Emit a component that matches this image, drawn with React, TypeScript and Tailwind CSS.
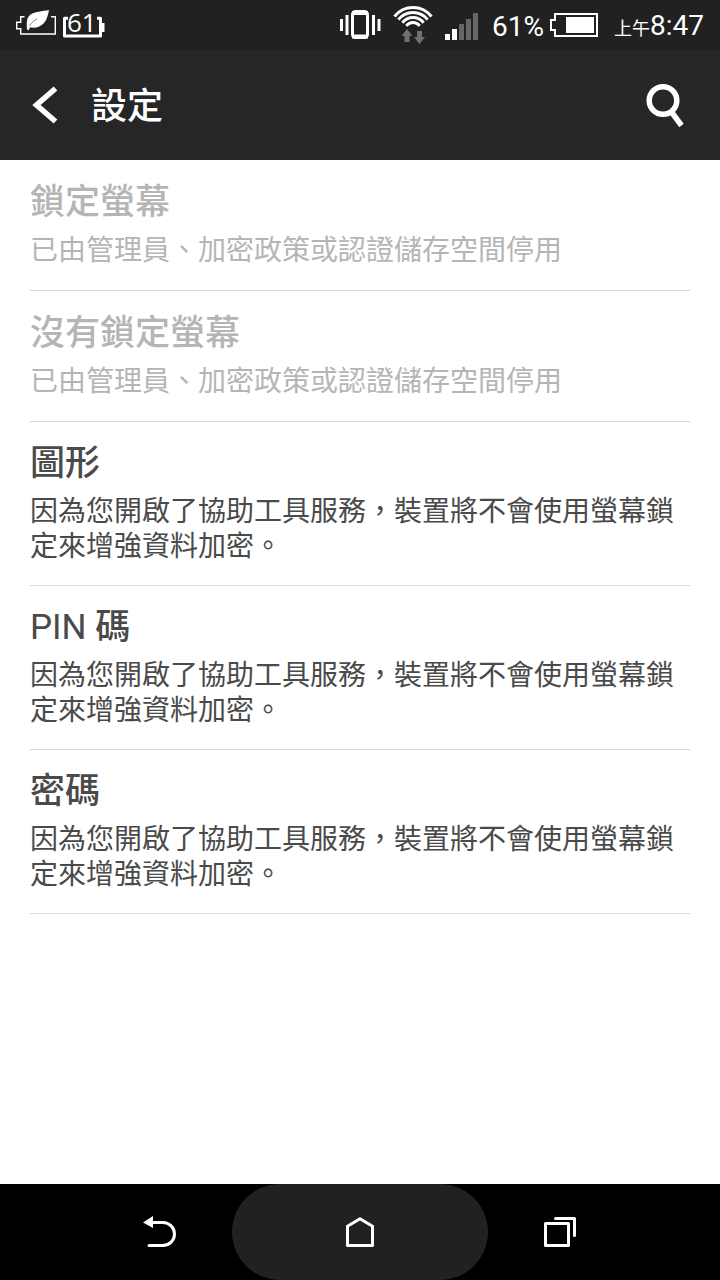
import type { ReactNode } from 'react';

interface LockOption {
  id: string;
  title: ReactNode;
  description: string;
  disabled?: boolean;
}

const DISABLED_TEXT = '已由管理員、加密政策或認證儲存空間停用';
const ACCESSIBILITY_TEXT = '因為您開啟了協助工具服務，裝置將不會使用螢幕鎖定來增強資料加密。';

const options: LockOption[] = [
  { id: 'lock', title: '鎖定螢幕', description: DISABLED_TEXT, disabled: true },
  { id: 'none', title: '沒有鎖定螢幕', description: DISABLED_TEXT, disabled: true },
  { id: 'pattern', title: '圖形', description: ACCESSIBILITY_TEXT },
  { id: 'pin', title: <><span className="font-normal">PIN</span> 碼</>, description: ACCESSIBILITY_TEXT },
  { id: 'password', title: '密碼', description: ACCESSIBILITY_TEXT },
];

function StatusBar() {
  return (
    <div className="flex h-[50px] items-center justify-between bg-[#212121] px-4 text-white">
      <div className="flex items-center gap-1.5">
        {/* Power saver */}
        <svg width="41" height="50" viewBox="0 0 41 50" fill="none">
          <path d="M8.500 16.7H4.700v5.600H.7v6.400h4v5.300H39.300V16.700H35" stroke="#fff" strokeWidth="1.400" />
          <path d="M33 10C27 11.500 18 11 13.500 15.500 10.500 18.500 10.500 23 11 29.500l1.700.8 1.300-3C19 28.500 24.500 27 28 23c3-3.500 4-8 5-13Z" fill="#fff" />
          <path d="M13.500 26c2-3.500 4.500-5.500 7.500-7" stroke="#666" strokeWidth=".8" />
        </svg>
        <div className="relative flex h-[50px] w-[42px] items-center">
          <svg className="absolute inset-0" width="42" height="50" viewBox="0 0 42 50" fill="none">
            <path d="M5 18.200H1.500V36H37.500V18.200H34" stroke="#fff" strokeWidth="3" strokeLinejoin="round" />
            <path d="M37 23h4.500v9H37z" fill="#fff" />
          </svg>
          <span className="relative pb-1.5 pl-1 font-['Open_Sans',sans-serif] text-[26px] leading-none">61</span>
        </div>
      </div>
      <div className="flex items-center">
        <svg className="mr-3" width="41" height="50" viewBox="0 0 41 50" fill="none" stroke="#fff">
          <path d="M1.500 19v12M7 15v20M33.500 15v20M39 19v12" strokeWidth="3" />
          <rect x="12.500" y="11.500" width="15" height="26" rx="3" strokeWidth="3" />
          <path d="M12 13h16M12 36.500h16" strokeWidth="4" />
        </svg>
        <svg className="mr-3" width="40" height="50" viewBox="0 0 40 50" fill="none">
          <path
            d="M1.500 16.500a23.500 23.500 0 0 1 37 0M5.400 19.600a18.500 18.500 0 0 1 29.200 0M9.400 22.700a13.500 13.500 0 0 1 21.200 0M13.300 25.800a8.500 8.500 0 0 1 13.400 0"
            stroke="#fff"
            strokeWidth="3"
          />
          <path d="M14 29l5.500 7h-3v6h-5v-6h-3zM26.500 44L21 37h3v-6h5v6h3z" fill="#707070" />
        </svg>
        <svg className="mr-3" width="35" height="50" viewBox="0 0 35 50">
          <path d="M0 34h5v6H0zM7 29h5v11H7z" fill="#fff" />
          <path d="M14 24h5v16h-5zM21 19h5v21h-5zM28 13h5v27h-5z" fill="#666" />
        </svg>
        <span className="mr-1.5 pt-1 text-[28px] leading-none">61%</span>
        <svg className="mr-4" width="48" height="50" viewBox="0 0 48 50" fill="none">
          <path d="M5 14h42v22H5v-6H1V20h4z" stroke="#fff" strokeWidth="2" />
          <path d="M16 17h28v16H16z" fill="#fff" />
        </svg>
        <div className="flex items-baseline pt-0.5">
          <span className="text-lg leading-none">上午</span>
          <span className="text-[28px] leading-none">8:47</span>
        </div>
      </div>
    </div>
  );
}

function Header() {
  return (
    <header className="flex h-[110px] items-center bg-[#262626] px-8 text-white">
      <button type="button" aria-label="返回" className="mr-8">
        <svg width="27" height="40" viewBox="0 0 27 40" fill="none">
          <path d="M23.500 3.500L4.500 20l19 16.500" stroke="#fff" strokeWidth="5.500" />
        </svg>
      </button>
      <h1 className="flex-1 pt-1 text-4xl leading-none font-medium">設定</h1>
      <button type="button" aria-label="搜尋">
        <svg width="42" height="46" viewBox="0 0 42 46" fill="none" stroke="#fff">
          <circle cx="17" cy="18.500" r="13.800" strokeWidth="5.500" />
          <path d="M25.500 30L35.500 43.500" strokeWidth="5.500" />
        </svg>
      </button>
    </header>
  );
}

function OptionRow({ title, description, disabled }: LockOption) {
  return (
    <li className="border-b border-[#d9d9d9]">
      <button
        type="button"
        disabled={disabled}
        className={`block w-full pt-5 pb-[21px] text-left ${
          disabled ? 'min-h-[130px] text-[#b5b5b5]' : 'text-[#4a4a4a]'
        }`}
      >
        <span className="block text-[35px] leading-[44px] font-medium">{title}</span>
        <span className="mt-2 block text-[28px] leading-[35px]">{description}</span>
      </button>
    </li>
  );
}

function NavBar() {
  return (
    <nav className="flex h-24 justify-center bg-black">
      <button type="button" aria-label="上一頁" className="flex w-36 items-center justify-center">
        <svg width="36" height="32" viewBox="0 0 36 32" fill="none">
          <path d="M10 6.500h11a11.500 11.500 0 0 1 0 23H7" stroke="#fff" strokeWidth="3" strokeLinecap="round" />
          <path d="M1 6.500L11 0v12z" fill="#fff" />
        </svg>
      </button>
      <button type="button" aria-label="主畫面" className="flex w-64 items-center justify-center rounded-full bg-[#212121]">
        <svg width="36" height="32" viewBox="0 0 36 32" fill="none">
          <path d="M5.500 29.500V10.300L18 2.800l12.500 7.500v19.200z" stroke="#fff" strokeWidth="3" strokeLinejoin="round" />
        </svg>
      </button>
      <button type="button" aria-label="最近使用" className="flex w-36 items-center justify-center">
        <svg width="36" height="32" viewBox="0 0 36 32" fill="none" stroke="#fff" strokeWidth="3" strokeLinejoin="round">
          <rect x="3.500" y="7.500" width="23" height="22" />
          <path d="M13.500 2.500h19v17" strokeLinecap="round" />
        </svg>
      </button>
    </nav>
  );
}

export default function App() {
  return (
    <div lang="zh-Hant" className="flex min-h-screen flex-col bg-white font-[Roboto,'Noto_Sans_CJK_TC',sans-serif]">
      <StatusBar />
      <Header />
      <main className="flex-1 px-[30px]">
        <ul>
          {options.map((option) => (
            <OptionRow key={option.id} {...option} />
          ))}
        </ul>
      </main>
      <NavBar />
    </div>
  );
}
